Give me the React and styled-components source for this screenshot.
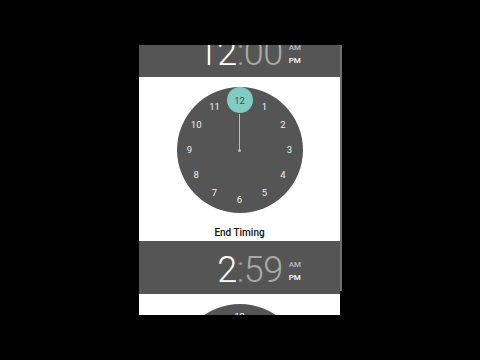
import React from 'react'
import styled, { createGlobalStyle } from 'styled-components'

const GlobalStyle = createGlobalStyle`
  html, body {
    margin: 0;
    padding: 0;
    background: #000;
    font-family: Roboto, "Noto Sans", sans-serif;
  }
`

const Page = styled.div`
  width: 480px;
  height: 360px;
  padding: 45px 0 0 139px;
  box-sizing: border-box;
  background: #000;
`

const Screen = styled.div`
  position: relative;
  width: 203px;
  height: 270px;
  overflow: hidden;
`

const Scroller = styled.div`
  width: 201px;
  margin-top: -21px;
  display: flex;
  flex-direction: column;
`

const ScrollThumb = styled.div`
  position: absolute;
  top: 0;
  right: 0;
  width: 2px;
  height: 246px;
  background: rgba(150, 150, 150, 0.75);
`

const TimeHeader = styled.div`
  height: 53px;
  box-sizing: border-box;
  background: #555555;
  display: flex;
  justify-content: flex-end;
  align-items: flex-start;
  padding: 11px 39px 0 0;
  gap: 6px;
`

const Digits = styled.div`
  font-size: 36px;
  font-weight: 300;
  line-height: 36px;
  letter-spacing: -0.5px;
  color: #a9a9a9;
`

const Hours = styled.span`
  color: ${p => (p.$active ? '#ffffff' : '#a9a9a9')};
`

const Colon = styled.span`
  color: #9a9a9a;
`

const Meridiem = styled.div`
  display: flex;
  flex-direction: column;
  margin-top: 6px;
`

const MeridiemLabel = styled.span`
  font-size: 8px;
  font-weight: 500;
  line-height: 13px;
  color: ${p => (p.$active ? '#ffffff' : '#b8b8b8')};
`

const ClockSection = styled.div`
  background: #ffffff;
  display: flex;
  flex-direction: column;
  align-items: center;
  padding: 10px 0 2px;
`

const Dial = styled.div`
  position: relative;
  width: 126px;
  height: 126px;
  flex: none;
  border-radius: 50%;
  background: #555555;
`

const Number = styled.span`
  position: absolute;
  transform: translate(-50%, -50%);
  font-size: 9.5px;
  line-height: 10px;
  color: #f0f0f0;
`

const Selector = styled.div`
  position: absolute;
  width: 26px;
  height: 26px;
  margin: -13px 0 0 -13px;
  border-radius: 50%;
  background: #80cbc4;
  display: flex;
  align-items: center;
  justify-content: center;
  font-size: 9.5px;
  color: #4a4a4a;
`

const Hand = styled.div`
  position: absolute;
  left: 62.25px;
  bottom: 62px;
  width: 1.5px;
  height: 37px;
  background: #8fd3cc;
  transform-origin: 50% 100%;
`

const Pivot = styled.div`
  position: absolute;
  left: 61.5px;
  top: 61.5px;
  width: 3px;
  height: 3px;
  border-radius: 50%;
  background: #8fd3cc;
`

const Caption = styled.div`
  margin-top: 14px;
  font-size: 10px;
  font-weight: 500;
  line-height: 12px;
  color: #111;
`

const hours = [12, 1, 2, 3, 4, 5, 6, 7, 8, 9, 10, 11]

const spot = (i, r = 50) => {
  const a = (i * 30 * Math.PI) / 180
  return { left: 63 + r * Math.sin(a), top: 63 - r * Math.cos(a) }
}

const Clock = ({ selected }) => {
  const sel = hours.indexOf(selected)
  return (
    <Dial>
      {hours.map((h, i) =>
        i === sel ? null : (
          <Number key={h} style={spot(i)}>
            {h}
          </Number>
        )
      )}
      <Hand style={{ transform: `rotate(${sel * 30}deg)` }} />
      <Pivot />
      <Selector style={spot(sel)}>{selected}</Selector>
    </Dial>
  )
}

const Time = ({ h, m, pm }) => (
  <TimeHeader>
    <Digits>
      <Hours $active>{h}</Hours>
      <Colon>:</Colon>
      {m}
    </Digits>
    <Meridiem>
      <MeridiemLabel $active={!pm}>AM</MeridiemLabel>
      <MeridiemLabel $active={pm}>PM</MeridiemLabel>
    </Meridiem>
  </TimeHeader>
)

const App = () => (
  <Page>
    <GlobalStyle />
    <Screen>
      <Scroller>
        <Time h="12" m="00" pm />
        <ClockSection>
          <Clock selected={12} />
          <Caption>End Timing</Caption>
        </ClockSection>
        <Time h="2" m="59" pm />
        <ClockSection>
          <Clock selected={2} />
        </ClockSection>
      </Scroller>
      <ScrollThumb />
    </Screen>
  </Page>
)

export default App
